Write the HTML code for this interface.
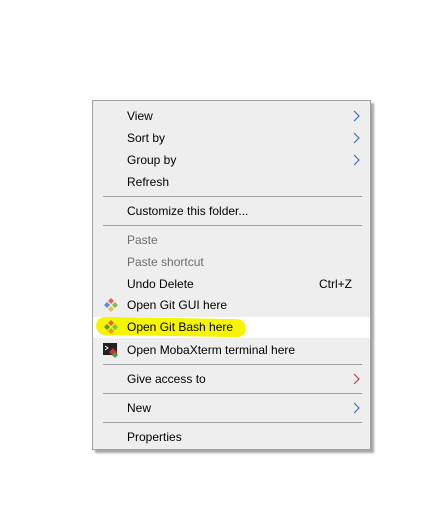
<!DOCTYPE html>
<html><head><style>
html,body{margin:0;padding:0;background:#fff;width:437px;height:526px;overflow:hidden;font-family:"Liberation Sans",sans-serif;}
.menu{position:absolute;left:92px;top:100px;width:279px;height:350px;background:#eeeeee;border:1px solid #a0a0a0;box-sizing:border-box;box-shadow:3px 3px 2px rgba(0,0,0,0.35);}
.t{position:absolute;left:127px;font-size:12px;color:#000;line-height:14px;}
.g{color:#6d6d6d;}
.sep{position:absolute;left:103px;width:259px;height:1px;background:#a0a0a0;}
.arr{position:absolute;left:352px;}
</style></head><body>
<div class="menu"></div>
<div style="position:absolute;left:93px;top:317px;width:277px;height:21px;background:#fff"></div>
<div style="position:absolute;left:96px;top:318px;width:150px;height:18px;background:#f5f500;border-radius:9px;transform:rotate(1deg)"></div>
<div class="t" style="top:109px">View</div>
<div class="t" style="top:131px">Sort by</div>
<div class="t" style="top:153px">Group by</div>
<div class="t" style="top:175px">Refresh</div>
<div class="sep" style="top:196px"></div>
<div class="t" style="top:204px">Customize this folder...</div>
<div class="sep" style="top:225px"></div>
<div class="t g" style="top:233px">Paste</div>
<div class="t g" style="top:255px">Paste shortcut</div>
<div class="t" style="top:277px">Undo Delete</div>
<div class="t" style="top:277px;left:319px">Ctrl+Z</div>
<div class="t" style="top:298px">Open Git GUI here</div>
<div class="t" style="top:320px">Open Git Bash here</div>
<div class="t" style="top:343px">Open MobaXterm terminal here</div>
<div class="sep" style="top:364px"></div>
<div class="t" style="top:372px">Give access to</div>
<div class="sep" style="top:393px"></div>
<div class="t" style="top:401px">New</div>
<div class="sep" style="top:422px"></div>
<div class="t" style="top:430px">Properties</div>
<svg class="arr" style="top:110px" width="10" height="12"><path d="M2 1l5 5-5 5" stroke="#3a6fc0" fill="none" stroke-width="1.2"/></svg>
<svg class="arr" style="top:132px" width="10" height="12"><path d="M2 1l5 5-5 5" stroke="#3a6fc0" fill="none" stroke-width="1.2"/></svg>
<svg class="arr" style="top:154px" width="10" height="12"><path d="M2 1l5 5-5 5" stroke="#3a6fc0" fill="none" stroke-width="1.2"/></svg>
<svg class="arr" style="top:373px" width="10" height="12"><path d="M2 1l5 5-5 5" stroke="#c04040" fill="none" stroke-width="1.2"/></svg>
<svg class="arr" style="top:402px" width="10" height="12"><path d="M2 1l5 5-5 5" stroke="#3a6fc0" fill="none" stroke-width="1.2"/></svg>
<svg style="position:absolute;left:103px;top:297px" width="16" height="16"><path d="M8 1l3 3-3 3-3-3z" fill="#e86060"/><path d="M4 5l3 3-3 3-3-3z" fill="#5b8fe0"/><path d="M12 5l3 3-3 3-3-3z" fill="#7cc050"/><path d="M8 9l3 3-3 3-3-3z" fill="#f0c040"/></svg>
<svg style="position:absolute;left:103px;top:319px" width="16" height="16"><path d="M8 1l3 3-3 3-3-3z" fill="#e86040"/><path d="M4 5l3 3-3 3-3-3z" fill="#5a9a30"/><path d="M12 5l3 3-3 3-3-3z" fill="#7cc050"/><path d="M8 9l3 3-3 3-3-3z" fill="#e0a020"/></svg>
<svg style="position:absolute;left:103px;top:342px" width="16" height="16"><rect x="0" y="1" width="14" height="12" fill="#222"/><path d="M2 4l3 2-3 2" stroke="#fff" fill="none"/><path d="M6 10l4-4 4 4-4 4z" fill="#d03030"/><path d="M9 13l3-3 3 3-3 3z" fill="#40a040"/></svg>
</body></html>
